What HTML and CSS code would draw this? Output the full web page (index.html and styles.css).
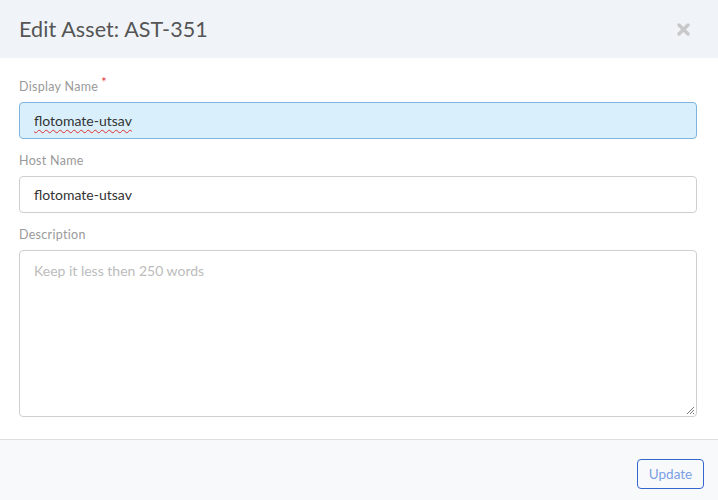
FILE: index.html
```html
<!DOCTYPE html>
<html lang="en">
<head>
  <meta charset="UTF-8" />
  <title>Edit Asset</title>
  <link rel="stylesheet" href="styles.css">
</head>
<body>
  <div class="modal">
    <div class="modal-header">
      <h2 class="modal-title">Edit Asset: AST-351</h2>
      <button class="close-btn" aria-label="Close">
        <svg width="13" height="13" viewBox="0 0 13 13">
          <path d="M2 2 L11 11 M11 2 L2 11" stroke="#c8c8c8" stroke-width="3.4" stroke-linecap="round"/>
        </svg>
      </button>
    </div>
    <div class="modal-body">
      <div class="field">
        <label class="field-label">Display Name<span class="required">*</span></label>
        <div class="input input-focus"><span class="spell">flotomate-utsav</span></div>
      </div>
      <div class="field">
        <label class="field-label">Host Name</label>
        <div class="input">flotomate-utsav</div>
      </div>
      <div class="field">
        <label class="field-label">Description</label>
        <div class="textarea">
          <span class="placeholder">Keep it less then 250 words</span>
          <svg class="grip" width="9" height="9" viewBox="0 0 9 9">
            <path d="M8 1 L1 8 M8 4 L4 8 M8 7 L7 8" stroke="#777" stroke-width="1"/>
          </svg>
        </div>
      </div>
    </div>
    <div class="modal-footer">
      <button class="btn-outline">Update</button>
    </div>
  </div>
</body>
</html>
```

FILE: styles.css
```css
body {
  margin: 0;
  font-family: 'Lato', 'Open Sans', sans-serif;
  background: #fff;
}

.modal {
  width: 718px;
  height: 500px;
  display: flex;
  flex-direction: column;
}

.modal-header {
  height: 58px;
  background-color: #f0f4f8;
  display: flex;
  align-items: center;
  justify-content: space-between;
  padding: 0 28px 0 19px;
}

.modal-title {
  margin: 0;
  font-size: 21.5px;
  font-weight: 400;
  color: #555;
  letter-spacing: 0.1px;
}

.close-btn {
  background: none;
  border: none;
  padding: 0;
  display: flex;
  cursor: pointer;
}

.modal-body {
  flex: 1;
  padding: 21px 21px 0 19px;
  border-bottom: 1px solid #dcdee2;
}

.field {
  margin-bottom: 14px;
}

.field-label {
  display: block;
  font-size: 12.5px;
  line-height: 15px;
  color: #9a9a9a;
  margin-bottom: 8px;
  letter-spacing: 0.3px;
}

.required {
  color: #e0323a;
  margin-left: 3px;
  position: relative;
  top: -4px;
}

.input {
  height: 37px;
  box-sizing: border-box;
  border: 1px solid #cfcfcf;
  border-radius: 4px;
  padding: 0 14px;
  display: flex;
  align-items: center;
  font-size: 14px;
  color: #333;
}

.input-focus {
  background-color: #d9f0fc;
  border-color: #7eb4dc;
}

.spell {
  text-decoration: underline wavy #e03030;
  text-decoration-thickness: 1px;
  text-underline-offset: 3px;
}

.textarea {
  height: 167px;
  border: 1px solid #cfcfcf;
  border-radius: 4px;
  padding: 11px 14px;
  box-sizing: border-box;
  position: relative;
  font-size: 14px;
}

.placeholder {
  color: #bcbcbc;
}

.grip {
  position: absolute;
  right: 1px;
  bottom: 1px;
}

.modal-footer {
  height: 60px;
  background-color: #f8f9fb;
  display: flex;
  align-items: center;
  justify-content: flex-end;
  padding: 0 14px 0 0;
}

.btn-outline {
  font-family: 'Lato', 'Open Sans', sans-serif;
  font-size: 13.5px;
  color: #7a9fe6;
  background: #f8f9fb;
  border: 1px solid #3466cc;
  border-radius: 4px;
  height: 30px;
  width: 67px;
  padding: 0;
  margin-top: 8px;
  cursor: pointer;
}
```
